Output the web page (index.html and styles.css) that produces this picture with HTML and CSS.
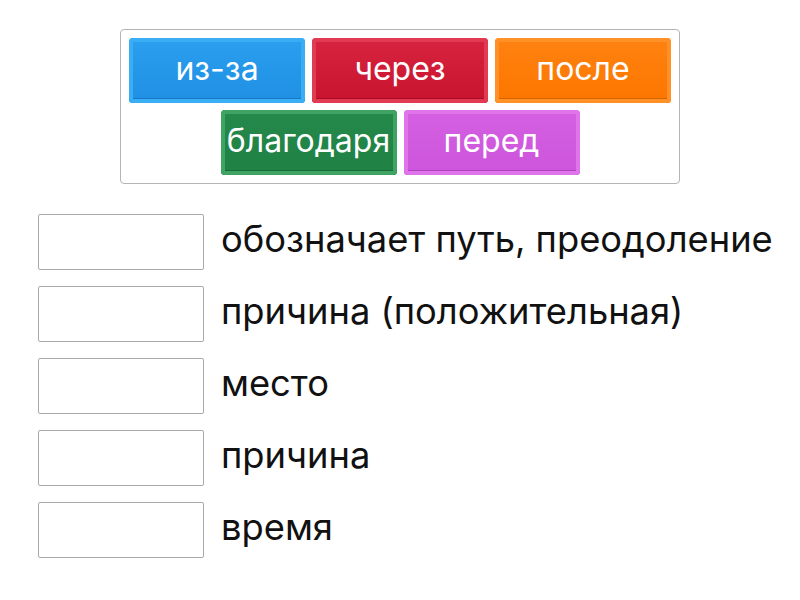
FILE: index.html
```html
<!DOCTYPE html>
<html lang="ru">
<head>
<meta charset="utf-8">
<link rel="stylesheet" href="styles.css">
</head>
<body>
<div class="page">
  <div class="bank">
    <div class="tile blue"><span>из-за</span></div>
    <div class="tile red"><span>через</span></div>
    <div class="tile orange"><span>после</span></div>
    <div class="tile green"><span>благодаря</span></div>
    <div class="tile purple"><span>перед</span></div>
  </div>
  <div class="rows">
    <div class="row"><div class="slot"></div><div class="label">обозначает путь, преодоление</div></div>
    <div class="row"><div class="slot"></div><div class="label">причина (положительная)</div></div>
    <div class="row"><div class="slot"></div><div class="label">место</div></div>
    <div class="row"><div class="slot"></div><div class="label">причина</div></div>
    <div class="row"><div class="slot"></div><div class="label">время</div></div>
  </div>
</div>
</body>
</html>
```
FILE: styles.css
```css
html, body { margin: 0; padding: 0; background: #fff; }
body { font-family: Inter, "Noto Sans", sans-serif; }
.page { padding: 29px 0 0 38px; }
.bank {
  margin-left: 82px;
  width: 560px;
  height: 155px;
  border: 1px solid #b5b5b5;
  border-radius: 4px;
  box-sizing: border-box;
  padding: 8px 8px 0 8px;
  display: flex;
  flex-wrap: wrap;
  justify-content: center;
  column-gap: 7px;
  row-gap: 7px;
  align-content: flex-start;
}
.tile {
  width: 176px;
  height: 65px;
  box-sizing: border-box;
  border-radius: 4px;
  display: flex;
  align-items: center;
  justify-content: center;
  color: #fff;
  font-size: 32px;
  padding-bottom: 5px;
  white-space: nowrap;
}
.blue { background: linear-gradient(#2b9ff0, #1f8fe2); box-shadow: inset 0 0 0 4px #3aaef5, inset 0 -5px 0 #1679cc; }
.red { background: linear-gradient(#d9243f, #c8132f); box-shadow: inset 0 0 0 4px #e23a52, inset 0 -5px 0 #a80d25; }
.orange { background: linear-gradient(#ff8210, #fc7600); box-shadow: inset 0 0 0 4px #ff9126, inset 0 -5px 0 #d86300; }
.green { background: linear-gradient(#26894c, #1f8144); box-shadow: inset 0 0 0 4px #3ea363, inset 0 -5px 0 #176b37; }
.purple { background: linear-gradient(#d560e2, #cc55db); box-shadow: inset 0 0 0 4px #df74eb, inset 0 -5px 0 #b042c2; }
.rows { margin-top: 30px; display: flex; flex-direction: column; gap: 16px; }
.row { display: flex; align-items: center; gap: 17px; height: 56px; }
.slot {
  width: 166px;
  height: 56px;
  box-sizing: border-box;
  border: 1px solid #a9a9a9;
  border-radius: 2px;
  background: #fff;
}
.label { font-size: 36.3px; color: #111; position: relative; top: -3px; white-space: nowrap; }
```
